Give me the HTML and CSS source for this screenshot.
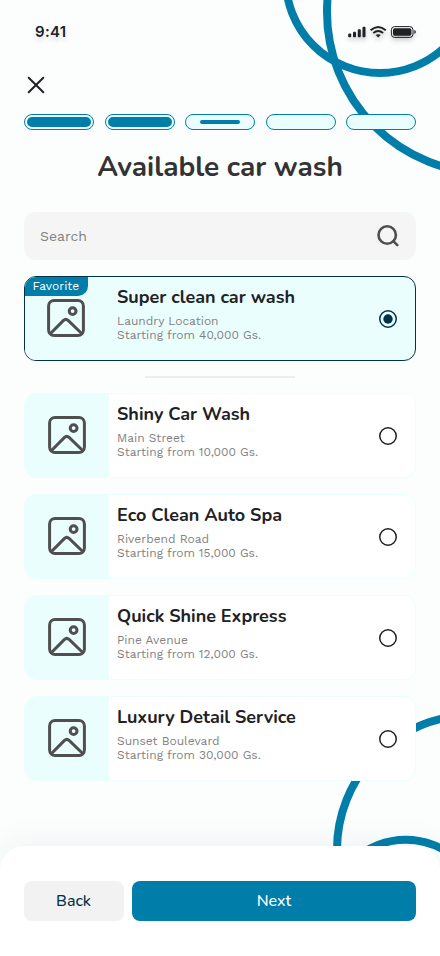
FILE: index.html
```
<!DOCTYPE html>
<html lang="en">
<head>
<meta charset="utf-8">
<meta name="viewport" content="width=device-width, initial-scale=1">
<title>Available car wash</title>
<link rel="stylesheet" href="styles.css">
</head>
<body>
<svg width="0" height="0" class="defs" aria-hidden="true">
  <symbol id="picture" viewBox="0 0 38 38">
    <g fill="none" stroke="#4f4f4f" stroke-width="3" stroke-linejoin="round">
      <rect x="1.6" y="1.6" width="34.8" height="34.8" rx="5.4"/>
      <circle cx="25.6" cy="12.1" r="3.4"/>
      <path d="M3 35 16.5 21.4Q18.8 19.2 21.1 21.4L35.2 35"/>
    </g>
  </symbol>
  <symbol id="radio" viewBox="0 0 18 18">
    <circle cx="9" cy="9" r="8.25" fill="none" stroke="currentColor" stroke-width="1.5"/>
  </symbol>
</svg>
<div class="screen">
  <svg class="rings" viewBox="0 0 440 956" aria-hidden="true">
    <circle cx="380" cy="-21.3" r="94.3"/>
    <circle cx="488" cy="12" r="161"/>
    <circle cx="471" cy="849.5" r="134"/>
    <circle cx="405.7" cy="914.7" r="75"/>
  </svg>

  <header class="status">
    <span class="time">9:41</span>
    <svg class="signals" width="70" height="16" viewBox="0 0 70 16" fill="#202124" aria-hidden="true">
      <rect x="1.2" y="9.6" width="3" height="3.6" rx=".9"/>
      <rect x="6" y="7.7" width="3" height="5.5" rx=".9"/>
      <rect x="10.8" y="5.3" width="3" height="7.9" rx=".9"/>
      <rect x="15.5" y="2.8" width="3" height="10.4" rx=".9"/>
      <g fill="none" stroke="#202124" stroke-width="1.9">
        <path d="M23.6 6.2Q31.2-.4 38.8 6.2"/>
        <path d="M26.3 9Q31.2 5 36.1 9"/>
      </g>
      <path d="M28.7 11.1Q31.2 9.3 33.7 11.1L31.2 13.6Z"/>
      <rect x="44.4" y="2.6" width="21.6" height="10.8" rx="3.2" fill="none" stroke="#202124"/>
      <rect x="46" y="4.2" width="18.4" height="7.6" rx="1.8"/>
      <path d="M67.3 6.1v3.8q1.6-.6 1.6-1.9t-1.6-1.9Z"/>
    </svg>
  </header>

  <main class="content">
    <svg class="close" width="24" height="24" viewBox="0 0 24 24" aria-label="Close"><path d="M4.7 4.7l14.6 14.6M19.3 4.7 4.7 19.3"/></svg>

    <div class="steps">
      <div class="step"><i class="full"></i></div>
      <div class="step"><i class="full"></i></div>
      <div class="step"><i class="half"></i></div>
      <div class="step"></div>
      <div class="step"></div>
    </div>

    <h1>Available car wash</h1>

    <div class="search">
      <span>Search</span>
      <svg width="24" height="24" viewBox="0 0 24 24" aria-hidden="true"><circle cx="11.2" cy="11" r="8.7"/><path d="M17.4 17.2l3.9 3.9"/></svg>
    </div>

    <section class="card selected">
      <span class="badge">Favorite</span>
      <div class="thumb"><svg width="38" height="38"><use href="#picture"/></svg></div>
      <div class="info">
        <h2>Super clean car wash</h2>
        <p>Laundry Location</p>
        <p>Starting from 40,000 Gs.</p>
      </div>
      <svg class="radio" width="18" height="18"><use href="#radio"/><circle cx="9" cy="9" r="4.7" fill="currentColor"/></svg>
    </section>

    <hr>

    <section class="card">
      <div class="thumb"><svg width="38" height="38"><use href="#picture"/></svg></div>
      <div class="info">
        <h2>Shiny Car Wash</h2>
        <p>Main Street</p>
        <p>Starting from 10,000 Gs.</p>
      </div>
      <svg class="radio" width="18" height="18"><use href="#radio"/></svg>
    </section>
    <section class="card">
      <div class="thumb"><svg width="38" height="38"><use href="#picture"/></svg></div>
      <div class="info">
        <h2>Eco Clean Auto Spa</h2>
        <p>Riverbend Road</p>
        <p>Starting from 15,000 Gs.</p>
      </div>
      <svg class="radio" width="18" height="18"><use href="#radio"/></svg>
    </section>
    <section class="card">
      <div class="thumb"><svg width="38" height="38"><use href="#picture"/></svg></div>
      <div class="info">
        <h2>Quick Shine Express</h2>
        <p>Pine Avenue</p>
        <p>Starting from 12,000 Gs.</p>
      </div>
      <svg class="radio" width="18" height="18"><use href="#radio"/></svg>
    </section>
    <section class="card">
      <div class="thumb"><svg width="38" height="38"><use href="#picture"/></svg></div>
      <div class="info">
        <h2>Luxury Detail Service</h2>
        <p>Sunset Boulevard</p>
        <p>Starting from 30,000 Gs.</p>
      </div>
      <svg class="radio" width="18" height="18"><use href="#radio"/></svg>
    </section>
  </main>

  <footer class="actions">
    <button class="back">Back</button>
    <button class="next">Next</button>
  </footer>
</div>
</body>
</html>
```
FILE: styles.css
```
* { box-sizing: border-box; }
body { margin: 0; font-family: Nunito, Lato, sans-serif; color: #202124; }
h1, h2, p { margin: 0; }
.defs { position: absolute; }
.screen {
  position: relative;
  width: 440px;
  height: 956px;
  overflow: hidden;
  background: #fbfefd;
  display: flex;
  flex-direction: column;
}
.rings { position: absolute; inset: 0; width: 440px; height: 956px; fill: none; stroke: #007ea9; stroke-width: 8; }
.status {
  position: relative;
  height: 64px;
  padding: 0 23px 0 35px;
  display: flex;
  align-items: center;
  justify-content: space-between;
}
.time { font: 600 15px/20px Inter, sans-serif; letter-spacing: .3px; text-shadow: 0 4px 4px rgba(0,0,0,.12); }
.signals { filter: drop-shadow(0 3px 2px rgba(0,0,0,.22)); }
.content {
  position: relative;
  flex: 1;
  padding: 9px 24px 0;
  display: flex;
  flex-direction: column;
}
.close { stroke: #202124; stroke-width: 2; stroke-linecap: round; fill: none; }
.steps { display: flex; gap: 10.5px; margin-top: 17px; }
.step {
  flex: 1;
  height: 16px;
  border: 1px solid #007ea9;
  border-radius: 8px;
  background: #ebfefe;
  display: flex;
  align-items: center;
  justify-content: center;
}
.full { width: 64px; height: 10px; border-radius: 5px; background: #007ea9; }
.half { width: 40px; height: 4px; border-radius: 2px; background: #007ea9; }
h1 { margin-top: 18px; font-size: 28px; line-height: 38px; font-weight: 700; text-align: center; color: #333; }
.search {
  margin-top: 26px;
  height: 48px;
  flex: none;
  border-radius: 12px;
  background: #f5f5f5;
  padding: 0 16px;
  display: flex;
  align-items: center;
  justify-content: space-between;
  font: 400 14px/20px "Work Sans", Inter, sans-serif;
  color: #828282;
}
.search svg { fill: none; stroke: #4f4f4f; stroke-width: 2.6; stroke-linecap: round; }
.card {
  position: relative;
  margin-top: 16px;
  height: 85px;
  flex: none;
  display: flex;
  border: 1px solid #ebfefe;
  border-radius: 12px;
  background: #fff;
  overflow: hidden;
}
.card.selected { border-color: #003349; background: #ebfefe; }
.thumb { width: 84px; background: #ebfefe; display: flex; align-items: center; justify-content: center; padding: 0 1px 1px 0; }
.selected .thumb { padding: 0 2px 1px 0; }
.info { flex: 1; padding: 8px 0 0 8px; }
.info h2 { font-size: 18px; line-height: 25px; font-weight: 700; margin-bottom: 4px; }
.info p { font: 400 12px/14px "Work Sans", Inter, sans-serif; color: #828282; }
.badge {
  position: absolute;
  left: 0;
  top: 0;
  width: 63px;
  height: 19px;
  padding-left: 7.5px;
  border-bottom-right-radius: 10px;
  background: #007ea9;
  color: #fff;
  font: 400 12px/18px "Work Sans", Inter, sans-serif;
}
.radio { align-self: center; margin-right: 18px; color: #202124; }
.selected .radio { color: #003349; }
hr { width: 150px; height: 2px; flex: none; margin: 15px auto -1px; border: 0; background: #ededed; }
.actions {
  position: relative;
  height: 110px;
  padding: 35px 24px;
  display: flex;
  gap: 8px;
  background: #fff;
  border-radius: 24px 24px 0 0;
  box-shadow: 0 -4px 30px rgba(0,51,73,.06);
}
button { height: 40px; border: 0; border-radius: 8px; font: 500 16px/22px Nunito, Lato, sans-serif; }
.back { width: 100px; padding: 0 7px 0 6px; background: #f2f2f2; color: #003349; }
.next { flex: 1; background: #007ea9; color: #fff; }
```
